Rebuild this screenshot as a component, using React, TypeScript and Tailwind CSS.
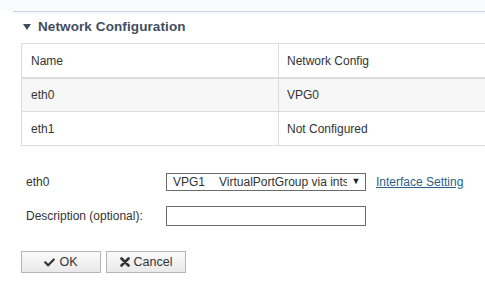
import { FaCheck } from "react-icons/fa";

const font = { fontFamily: '"Liberation Sans", Arial, sans-serif' };

export default function App() {
  return (
    <div
      className="relative w-[485px] h-[286px] overflow-hidden bg-white text-[12px] text-[#333]"
      style={font}
    >
      <div className="h-[11px] bg-[#fafbfc]" />
      <div className="ml-[13px] h-[3px] border-t border-[#c9d1da] bg-gradient-to-b from-[#eef1f4] to-white" />

      <div className="mt-[6px] ml-[23px] flex items-center gap-[7px] h-[14px]">
        <svg width="8" height="6" viewBox="0 0 8 6">
          <path d="M0 0 H8 L4 6 Z" fill="#3f4d60" />
        </svg>
        <span className="text-[13.5px] font-bold text-[#3f4d60] leading-none tracking-[0.1px]">
          Network Configuration
        </span>
      </div>

      <div className="mt-[9px] ml-[21px] w-[480px] border-t border-l border-[#dcdcdc]">
        <div className="flex h-[35px] border-b-2 border-[#dcdcdc]">
          <div className="w-[257px] border-r border-[#dcdcdc] pl-[9px] pt-[1px] flex items-center">Name</div>
          <div className="flex-1 pl-[8px] pt-[1px] flex items-center">Network Config</div>
        </div>
        <div className="flex h-[33px] border-b border-[#dcdcdc] bg-[#f7f7f7]">
          <div className="w-[257px] border-r border-[#dcdcdc] pl-[9px] flex items-center">eth0</div>
          <div className="flex-1 pl-[8px] flex items-center">VPG0</div>
        </div>
        <div className="flex h-[34px] border-b border-[#dcdcdc]">
          <div className="w-[257px] border-r border-[#dcdcdc] pl-[9px] flex items-center">eth1</div>
          <div className="flex-1 pl-[8px] flex items-center">Not Configured</div>
        </div>
      </div>

      <div className="ml-[26px] mt-[27px] flex items-center h-[18px]">
        <span className="w-[140px]">eth0</span>
        <div className="w-[200px] h-[18px] border border-[#6b6b6b] flex items-center">
          <div className="w-[180px] overflow-hidden whitespace-nowrap pl-[6px]">
            <span className="mr-[14px]">VPG1</span>VirtualPortGroup via intsw
          </div>
          <span className="flex-1 text-[9px] text-[#222] flex justify-center">▼</span>
        </div>
        <a className="ml-[10px] text-[#2b5f8c] underline">Interface Setting</a>
      </div>

      <div className="ml-[26px] mt-[15px] flex items-center h-[20px]">
        <span className="w-[140px]">Description (optional):</span>
        <div className="w-[200px] h-[20px] border border-[#6b6b6b] bg-white" />
      </div>

      <div className="ml-[21px] mt-[25px] flex gap-[5px]">
        <button className="w-[80px] h-[22px] border border-[#b5b5b5] bg-gradient-to-b from-[#fafafa] to-[#e9e9e9] flex items-center justify-center gap-[4px] text-[#333] text-[12.5px]">
          <FaCheck className="w-[11px] h-[11px]" />
          <span>OK</span>
        </button>
        <button className="w-[80px] h-[22px] border border-[#b5b5b5] bg-gradient-to-b from-[#fafafa] to-[#e9e9e9] flex items-center justify-center gap-[4px] text-[#333] text-[12.5px]">
          <svg width="10" height="10" viewBox="0 0 10 10">
            <path d="M1.5 1.5 L8.5 8.5 M8.5 1.5 L1.5 8.5" stroke="#333" strokeWidth="2.6" strokeLinecap="round" />
          </svg>
          <span>Cancel</span>
        </button>
      </div>
    </div>
  );
}
